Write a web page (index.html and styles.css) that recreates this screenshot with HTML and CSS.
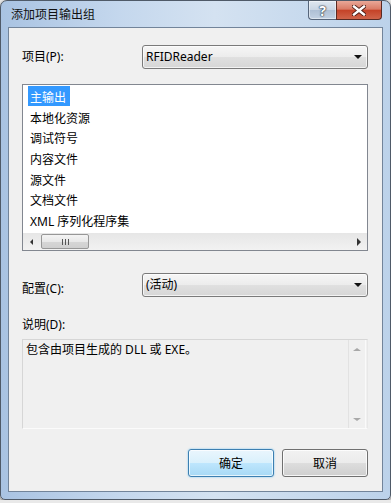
FILE: index.html
```html
<!DOCTYPE html>
<html lang="zh-CN">
<head>
    <meta charset="UTF-8">
    <title>添加项目输出组</title>
    <link rel="stylesheet" href="styles.css">
</head>
<body>
    <div class="window">
        <div class="titlebar">
            <span class="title">添加项目输出组</span>
            <div class="caption-buttons">
                <div class="cap help">?</div>
                <div class="cap close">
                    <svg width="14" height="11" viewBox="0 0 14 11">
                        <path d="M2 1.5 L12 9.5 M12 1.5 L2 9.5" stroke="#4a1a12" stroke-width="4.2" stroke-linecap="square"/>
                        <path d="M2 1.5 L12 9.5 M12 1.5 L2 9.5" stroke="#ffffff" stroke-width="2.4" stroke-linecap="square"/>
                    </svg>
                </div>
            </div>
        </div>

        <div class="client">
            <div class="field-row">
                <label class="field-label">项目(P):</label>
                <div class="combo">
                    <span class="combo-text">RFIDReader</span>
                    <span class="combo-arrow"></span>
                </div>
            </div>

            <div class="listbox">
                <ul class="items">
                    <li><span class="selected">主输出</span></li>
                    <li><span>本地化资源</span></li>
                    <li><span>调试符号</span></li>
                    <li><span>内容文件</span></li>
                    <li><span>源文件</span></li>
                    <li><span>文档文件</span></li>
                    <li><span>XML 序列化程序集</span></li>
                </ul>
                <div class="hscroll">
                    <div class="sb-btn"><span class="tri tri-left"></span></div>
                    <div class="thumb"><span class="grip"></span></div>
                    <div class="track"></div>
                    <div class="sb-btn"><span class="tri tri-right"></span></div>
                </div>
            </div>

            <div class="field-row config-row">
                <label class="field-label low">配置(C):</label>
                <div class="combo">
                    <span class="combo-text">(活动)</span>
                    <span class="combo-arrow"></span>
                </div>
            </div>

            <div class="desc-label">说明(D):</div>
            <div class="desc">
                <p class="desc-text">包含由项目生成的 DLL 或 EXE。</p>
                <div class="vscroll">
                    <span class="tri tri-up"></span>
                    <span class="tri tri-down"></span>
                </div>
            </div>

            <div class="buttons">
                <button class="btn default">确定</button>
                <button class="btn">取消</button>
            </div>
        </div>
    </div>
</body>
</html>
```

FILE: styles.css
```css
body {
    margin: 0;
    background-color: #e9e9e9;
    font-family: "Noto Sans", "Noto Sans CJK SC", sans-serif;
    font-size: 12px;
    color: #000;
}
.window {
    width: 391px;
    height: 500px;
    box-sizing: border-box;
    border: 1px solid #4f5a68;
    border-radius: 7px 7px 5px 5px;
    background: linear-gradient(to right, #a9c3e2 0%, #c4d7ed 30%, #d4e2f1 55%, #bcd2ea 100%);
    box-shadow: 0 1px 3px rgba(0, 0, 0, 0.6);
    display: flex;
    flex-direction: column;
}
.titlebar {
    height: 26px;
    display: flex;
    align-items: flex-start;
    padding-left: 10px;
}
.title {
    line-height: 28px;
    color: #111;
}
.caption-buttons {
    margin-left: auto;
    margin-right: 8px;
    display: flex;
}
.cap {
    height: 19px;
    box-sizing: border-box;
    border: 1px solid #56657a;
    border-top: none;
    display: flex;
    align-items: center;
    justify-content: center;
}
.help {
    width: 28px;
    border-right: none;
    border-radius: 0 0 0 4px;
    background: linear-gradient(#dfe7f0 0%, #c9d5e3 50%, #aebfd4 51%, #c2d1e2 100%);
    box-shadow: inset 0 0 0 1px rgba(255, 255, 255, 0.45);
    color: #fff;
    font-weight: bold;
    font-size: 14px;
    text-shadow: 0 0 1px #2c3948, 0 0 1px #2c3948, 0 0 2px #2c3948;
}
.close {
    width: 46px;
    border-color: #5a2a22;
    border-radius: 0 0 4px 0;
    background: linear-gradient(#e9a898 0%, #d97b66 45%, #c54328 52%, #d0644a 100%);
}
.client {
    flex: 1;
    margin: 0 7px 7px;
    border: 1px solid #72849a;
    background-color: #f0f0f0;
    padding: 17px 14px 14px 13px;
    display: flex;
    flex-direction: column;
}
.field-row {
    display: flex;
    height: 24px;
    align-items: center;
}
.field-label {
    width: 120px;
    line-height: 16px;
}
.field-label.low {
    padding-top: 8px;
}
.combo {
    flex: 1;
    height: 24px;
    box-sizing: border-box;
    border: 1px solid #7a7a7a;
    border-radius: 3px;
    background: linear-gradient(#f6f6f6 0%, #ececec 50%, #e0e0e0 51%, #d6d6d6 100%);
    box-shadow: inset 0 0 0 1px rgba(255, 255, 255, 0.7);
    display: flex;
    align-items: center;
    padding: 0 5px 0 3px;
}
.combo-text {
    flex: 1;
    line-height: 16px;
    padding-bottom: 1px;
}
.combo-arrow {
    width: 0;
    height: 0;
    border-left: 4px solid transparent;
    border-right: 4px solid transparent;
    border-top: 4px solid #111;
}
.listbox {
    margin-top: 15px;
    height: 167px;
    box-sizing: border-box;
    border: 1px solid #828790;
    background-color: #fff;
    display: flex;
    flex-direction: column;
}
.items {
    flex: 1;
    list-style: none;
    margin: 0;
    padding: 1px 0 0 5px;
}
.items li {
    height: 20.67px;
}
.items span {
    display: inline-block;
    padding: 3px 4px 0 2px;
    height: 20px;
    box-sizing: border-box;
    line-height: 17px;
}
.items .selected {
    background-color: #3399ff;
    color: #fff;
}
.hscroll {
    height: 17px;
    display: flex;
    align-items: stretch;
    background: linear-gradient(#e6e6e6, #f2f2f2);
}
.sb-btn {
    width: 17px;
    display: flex;
    align-items: center;
    justify-content: center;
}
.thumb {
    width: 48px;
    margin: 1px 0 1px 1px;
    box-sizing: border-box;
    border: 1px solid #979797;
    border-radius: 2px;
    background: linear-gradient(to bottom, #f4f4f4 0%, #e8e8e8 50%, #d6d6d6 51%, #cfcfcf 100%);
    display: flex;
    align-items: center;
    justify-content: center;
}
.grip {
    width: 7px;
    height: 6px;
    background: repeating-linear-gradient(to right, #555 0, #555 1px, transparent 1px, transparent 3px);
}
.track {
    flex: 1;
}
.tri {
    width: 0;
    height: 0;
}
.tri-left {
    border-top: 3px solid transparent;
    border-bottom: 3px solid transparent;
    border-right: 3px solid #333;
}
.tri-right {
    border-top: 4px solid transparent;
    border-bottom: 4px solid transparent;
    border-left: 4px solid #333;
}
.config-row {
    margin-top: 22px;
}
.desc-label {
    margin-top: 20px;
    line-height: 16px;
    height: 16px;
}
.desc {
    margin-top: 6px;
    height: 90px;
    box-sizing: border-box;
    border: 1px solid #d6d6d6;
    border-bottom-color: #fbfbfb;
    border-right-color: #e8e8e8;
    display: flex;
}
.desc-text {
    flex: 1;
    margin: 0;
    padding: 2px 0 0 3px;
    line-height: 16px;
}
.vscroll {
    width: 16px;
    margin-right: 1px;
    border-left: 1px solid #e2e2e2;
    border-right: 1px solid #fafafa;
    display: flex;
    flex-direction: column;
    align-items: center;
    justify-content: space-between;
    padding: 8px 0 7px;
}
.tri-up {
    border-left: 4px solid transparent;
    border-right: 4px solid transparent;
    border-bottom: 3px solid #a8a8a8;
}
.tri-down {
    border-left: 4px solid transparent;
    border-right: 4px solid transparent;
    border-top: 3px solid #a8a8a8;
}
.buttons {
    margin-top: 20px;
    display: flex;
    justify-content: flex-end;
    gap: 8px;
}
.btn {
    width: 86px;
    height: 28px;
    border: 1px solid #707070;
    border-radius: 3px;
    background: linear-gradient(#f2f2f2 0%, #ebebeb 50%, #dddddd 51%, #cfcfcf 100%);
    box-shadow: inset 0 0 0 1px rgba(255, 255, 255, 0.8);
    font-family: "Noto Sans", "Noto Sans CJK SC", sans-serif;
    font-size: 12px;
    color: #000;
    padding: 0;
}
.btn.default {
    border-color: #3c7fb1;
    background: linear-gradient(#eaf6fd 0%, #d9f0fc 50%, #bee6fd 51%, #a7d9f5 100%);
    box-shadow: inset 0 0 0 1px rgba(255, 255, 255, 0.7), 0 0 2px #6fc3f1;
}
```
